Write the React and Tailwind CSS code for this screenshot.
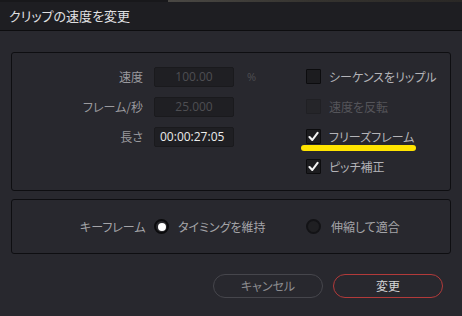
import React from 'react';

const jp = "font-['Noto_Sans_CJK_JP','Noto_Sans',sans-serif] [font-feature-settings:'palt']";

const Check = () => (
    <svg width="11" height="11" viewBox="0 0 11 11" fill="none">
        <path d="M1.5 6 L4.3 9 L9.6 1.8" stroke="#f4f4f4" strokeWidth="2.1" strokeLinecap="round" strokeLinejoin="round" />
    </svg>
);

const Box = ({ checked, label, dim, marked }) => (
    <div className="relative flex items-center h-[15px]">
        <div className={`w-[15px] h-[15px] flex items-center justify-center rounded-[1px] border ${dim ? 'bg-[#252529] border-[#202024]' : 'bg-[#1c1c1f] border-[#0c0c0e]'}`}>
            {checked && <Check />}
        </div>
        <span className={`ml-[8px] text-[12px] leading-none whitespace-nowrap ${dim ? 'text-[#55555a]' : 'text-[#b4b4b8]'}`}>{label}</span>
        {marked && <div className="absolute left-[-5px] top-[16px] w-[115px] h-[6px] rounded-full bg-[#ffe400]" />}
    </div>
);

const Field = ({ label, value, dim, unit }) => (
    <div className="flex items-center h-[20px]">
        <span className="w-[131px] text-right text-[12px] leading-none text-[#9a9a9e] whitespace-nowrap">{label}</span>
        <div className={`ml-[11px] w-[80px] h-[20px] flex items-center rounded-[2px] border border-[#1a1a1d] bg-[#1f1f23] font-['Open_Sans',sans-serif] text-[12px] ${dim ? 'justify-center text-[#4e4e52]' : 'pl-[5px] text-[#ececec]'}`}>
            {value}
        </div>
        {unit && <span className="ml-[13px] font-['Open_Sans',sans-serif] text-[11px] text-[#4e4e52]">{unit}</span>}
    </div>
);

const Radio = ({ on }) => (
    <div className={`shrink-0 w-[15px] h-[15px] rounded-full flex items-center justify-center border-2 ${on ? 'border-[#0b0b0d] bg-[#2a2a2e]' : 'border-[#131316] bg-[#1f1f22]'}`}>
        {on && <div className="w-[8px] h-[8px] rounded-full bg-white" />}
    </div>
);

export default function App() {
    return (
        <div className={`w-[462px] h-[316px] overflow-hidden flex flex-col bg-[#28282e] ${jp}`}>
            <div className="h-[2px] flex">
                <div className="w-[168px] bg-[#18181b]" />
                <div className="flex-1 bg-gradient-to-r from-[#4a4844] via-[#35332f] to-[#2a2826]" />
            </div>
            <div className="h-[29px] flex items-center pl-[9px] bg-[#1e1e22] border-b border-[#0d0d0f] text-[13px] text-[#e0e0e2]">
                クリップの速度を変更
            </div>

            <div className="px-[11px] pt-[21px]">
                {/* speed settings */}
                <div className="h-[139px] flex border border-[#0e0e11] rounded-[3px]">
                    <div className="w-[250px] shrink-0 flex flex-col gap-[10px] pt-[14px]">
                        <Field label="速度" value="100.00" dim unit="%" />
                        <Field label="フレーム/秒" value="25.000" dim />
                        <Field label="長さ" value="00:00:27:05" />
                    </div>
                    <div className="ml-[44px] flex flex-col gap-[15px] pt-[16px]">
                        <Box label="シーケンスをリップル" />
                        <Box label="速度を反転" dim />
                        <Box label="フリーズフレーム" checked marked />
                        <Box label="ピッチ補正" checked />
                    </div>
                </div>

                {/* keyframes */}
                <div className="mt-[8px] h-[55px] flex items-center pl-[68px] border border-[#0e0e11] rounded-[3px] text-[12px] leading-none text-[#a4a4a8] whitespace-nowrap">
                    <span className="w-[62px] shrink-0">キーフレーム</span>
                    <div className="ml-[12px] w-[152px] shrink-0 flex items-center gap-[9px]">
                        <Radio on />
                        <span>タイミングを維持</span>
                    </div>
                    <div className="flex items-center gap-[10px]">
                        <Radio />
                        <span>伸縮して適合</span>
                    </div>
                </div>

                {/* buttons */}
                <div className="mt-[20px] flex justify-end gap-[10px] pr-[8px]">
                    <button className="w-[110px] h-[24px] rounded-full border border-[#46464c] text-[12px] text-[#8c8c90]">キャンセル</button>
                    <button className="w-[110px] h-[24px] rounded-full border border-[#b23a3a] text-[12px] text-[#d4d4d6]">変更</button>
                </div>
            </div>
        </div>
    );
}
